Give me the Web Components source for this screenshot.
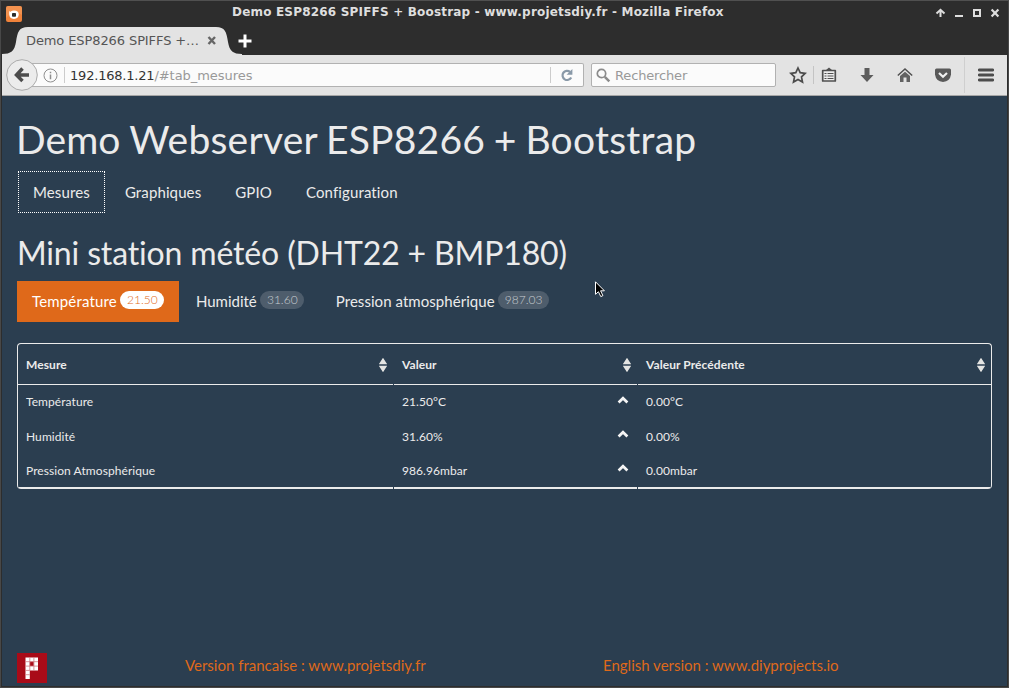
<!DOCTYPE html>
<html lang="fr">
<head>
<meta charset="utf-8">
<title>Demo ESP8266 SPIFFS + Boostrap</title>
<style>
  html, body { margin: 0; height: 100%; overflow: hidden; }
  body { font-family: "DejaVu Sans", sans-serif; }
</style>
</head>
<body>
<browser-window>
  <title-bar slot="chrome">Demo ESP8266 SPIFFS + Boostrap - www.projetsdiy.fr - Mozilla Firefox</title-bar>
  <tab-strip slot="chrome">Demo ESP8266 SPIFFS +…</tab-strip>
  <nav-toolbar slot="chrome"><span slot="host">192.168.1.21</span><span slot="path">/#tab_mesures</span><span slot="search">Rechercher</span></nav-toolbar>
  <station-page></station-page>
</browser-window>

<script>
const define = (name, html) => customElements.define(name, class extends HTMLElement {
  constructor() {
    super();
    const t = document.createElement('template');
    t.innerHTML = html;
    this.attachShadow({ mode: 'open' }).append(t.content.cloneNode(true));
  }
});

define('browser-window', `
<style>
  :host { display: flex; flex-direction: column; box-sizing: border-box; width: 100%; height: 100vh;
    background: #2d2d2d; border: 1px solid #484848; border-top-color: #505050; padding: 0 1px 1px; position: relative; }
  ::slotted(station-page) { flex: 1; }
  svg { position: absolute; left: 593px; top: 279px; }
</style>
<slot name="chrome"></slot><slot></slot>
<svg width="14" height="20" viewBox="0 0 14 20"><path d="M1.5 1.8V14.3L4.4 11.7L6.8 16.6L8.9 15.6L6.6 10.8H10.4Z" fill="#000" stroke="#fff" stroke-width="1"/></svg>
`);

define('title-bar', `
<style>
  :host { display: grid; grid-template-columns: 30px 1fr 74px; align-items: center; height: 24px; flex: none;
    color: #dedede; font: bold 12px/16px "DejaVu Sans", sans-serif; }
  .t { margin-left: 200px; white-space: nowrap; letter-spacing: .19px; position: relative; top: -1px; }
  svg { display: block; }
  .logo { margin: 1px 0 0 4px; }
</style>
<svg class="logo" width="16" height="16" viewBox="0 0 16 16"><rect width="16" height="16" rx="2" fill="#f0823a"/><path d="M0 12V2Q0 0 2 0H14Q16 0 16 2V9Q8 3 0 12Z" fill="#f6a164" opacity=".5"/><path d="M3.2 4.8Q4.2 6.600 5.2 5.3Q6 4.400 8 4.400Q12.6 4.4 12.8 8.3Q12.5 12.8 8 13Q3.4 12.8 3.2 8.300Z" fill="#fff"/><rect x="6" y="7" width="4" height="3.800" rx=".8" fill="#2d2d2d"/></svg>
<span class="t"><slot></slot></span>
<svg width="74" height="24" viewBox="0 0 74 24" fill="none" stroke="#dedede" stroke-width="2"><path d="M7.500 16V9M3.500 12.500L7.500 8.800L11.500 12.500"/><path d="M22 15H30"/><rect x="41" y="9" width="6" height="6"/><path d="M58.600 8.500L65.400 15.500M65.400 8.500L58.600 15.500" stroke-width="2.200"/></svg>
`);

define('tab-strip', `
<style>
  :host { display: flex; height: 29px; flex: none; margin-top: 1px; border-bottom: 1px solid #f0f0f0; margin-bottom: -1px;
    font: 13px/16px "DejaVu Sans", sans-serif; color: #555; letter-spacing: -.1px; }
  .tab { position: relative; box-sizing: border-box; display: flex; width: 232px; height: 29px; padding: 7px 0 0 24px; white-space: nowrap; }
  .bg { position: absolute; left: 0; top: 0; }
  .label { position: relative; width: 181px; flex: none; }
  .x { position: relative; margin-top: 3px; }
  .plus { margin: 8px 0 0 4px; }
</style>
<div class="tab">
  <svg class="bg" width="240" height="30" viewBox="0 0 240 30"><path d="M0 28C9 28 12.500 25 14 16C15.500 6 17 1 26 1H214C223 1 224.500 6 226 16C227.500 25 231 28 240 28V30H0Z" fill="#e3e3e3"/></svg>
  <span class="label"><slot></slot></span>
  <svg class="x" width="10" height="9" viewBox="0 0 10 9"><path d="M1.500 1L8 8M8 1L1.500 8" stroke="#666" stroke-width="2.400"/></svg>
</div>
<svg class="plus" width="14" height="14" viewBox="0 0 14 14"><path d="M7 .5V13.500M.5 7H13.500" stroke="#fff" stroke-width="3"/></svg>
`);

define('tool-icon', `
<style>
  :host { display: flex; justify-content: center; align-items: center; width: 38px; height: 40px; flex: none; }
  ::slotted(svg) { display: block; }
</style><slot></slot>
`);

define('nav-toolbar', `
<style>
  :host { display: flex; align-items: center; box-sizing: border-box; height: 41px; flex: none; background: #e3e3e3;
    border-bottom: 1px solid #a6a6a6; padding-left: 4px; font: 13px/16px "DejaVu Sans", sans-serif; color: #999; z-index: 1; }
  .back { position: relative; flex: none; width: 32px; height: 32px; z-index: 1; }
  .field { box-sizing: border-box; height: 24px; background: #fbfbfb; border: 1px solid #b1b1b1; border-radius: 2px; display: flex; align-items: center; white-space: nowrap; }
  .url { width: 556px; margin-left: -10px; padding-left: 15px; flex: none; border-left: 0; }
  .sep { width: 1px; height: 16px; background: #ccc; margin: 0 5px 0 6px; }
  .host { color: #333; letter-spacing: -.2px; }
  .host, .path, .q { padding-top: 1px; }
  .path { letter-spacing: -.05px; }
  .q { letter-spacing: -.15px; }
  .reload { margin-left: auto; display: flex; align-items: center; }
  .search { width: 185px; margin-left: 7px; padding-left: 4px; flex: none; }
  .search svg { margin-right: 4px; }
  .tall { width: 1px; height: 36px; background: #cfcfcf; flex: none; }
  svg { display: block; }
  .star { width: 36px; margin-left: 4px; }
  .short { width: 1px; height: 18px; background: #c4c4c4; margin-left: -3px; margin-right: -4px; flex: none; }
  .menu { width: 42px; }
</style>
<svg class="back" viewBox="0 0 32 32"><circle cx="16" cy="16" r="15.300" fill="#ececec" stroke="#ababab"/><path d="M10.500 16H23M16.500 9.500L10.500 16L16.500 22" fill="none" stroke="#4c4c4c" stroke-width="3.500"/></svg>
<div class="field url">
  <svg width="15" height="15" viewBox="0 0 15 15"><circle cx="7.500" cy="7.500" r="6.500" fill="none" stroke="#8f8f8f"/><path d="M7.500 6.500V11.200M7.500 3.700V5.300" stroke="#8f8f8f" stroke-width="1.500"/></svg>
  <span class="sep"></span><span class="host"><slot name="host"></slot></span><span class="path"><slot name="path"></slot></span>
  <span class="reload"><span class="sep" style="margin:0 9px 0 0"></span><svg style="margin-right:9px" width="14" height="14" viewBox="0 0 14 14"><path d="M10 3.800A4.600 4.600 0 1 0 11.200 9.500" fill="none" stroke="#8999a8" stroke-width="2.200"/><path d="M12.400 1V6.800H6.600Z" fill="#8999a8"/></svg></span>
</div>
<div class="field search"><svg width="15" height="15" viewBox="0 0 15 15"><circle cx="5.500" cy="5.500" r="4.200" fill="none" stroke="#8b8b8b" stroke-width="1.700"/><path d="M8.800 8.800L13.300 13.300" stroke="#8b8b8b" stroke-width="2.500"/></svg><span class="q"><slot name="search"></slot></span></div>
<tool-icon class="star"><svg width="18" height="18" viewBox="0 0 18 18"><path d="M9 2L11.200 6.700L16.200 7.300L12.500 10.800L13.500 16L9 13.400L4.500 16L5.500 10.800L1.800 7.300L6.800 6.700Z" fill="none" stroke="#4c4c4c" stroke-width="1.700"/></svg></tool-icon>
<span class="short"></span>
<tool-icon><svg width="16" height="16" viewBox="0 0 16 16"><path d="M1.700 3.500H14.300V14H1.700Z" fill="#eee" stroke="#505050" stroke-width="1.700" stroke-linejoin="round"/><path d="M4.500 3.500L8 .4L11.500 3.500Z" fill="#505050"/><path d="M3.500 6.500H5.500M3.500 9H5.500M3.500 11.500H5.500M6.500 6.500H12.500M6.500 9H12.500M6.500 11.500H12.500" stroke="#505050" stroke-width="1.100"/></svg></tool-icon>
<tool-icon><svg width="16" height="16" viewBox="0 0 16 16"><path d="M5.500 1H10.500V8H14.500L8 15L1.500 8H5.500Z" fill="#5c5c5c"/></svg></tool-icon>
<tool-icon><svg width="16" height="16" viewBox="0 0 16 16"><path d="M.8 8.500L8 2L15.200 8.500" fill="none" stroke="#505050" stroke-width="1.500"/><path d="M3 9L8 4.700L13 9V15H9.500V10.500H6.500V15H3Z" fill="#626262"/></svg></tool-icon>
<tool-icon><svg width="18" height="16" viewBox="0 0 18 16"><path d="M1 3Q1 1.500 2.500 1.500H15.500Q17 1.500 17 3V7.500Q16 14.500 9 15Q2 14.500 1 7.500Z" fill="#595959"/><path d="M5 6L9 9.800L13 6" fill="none" stroke="#f0f0f0" stroke-width="2.200"/></svg></tool-icon>
<span style="width:2px;flex:none"></span><span class="tall"></span>
<tool-icon class="menu"><svg width="16" height="14" viewBox="0 0 16 14"><path d="M1.200 2H14.800M1.200 7H14.800M1.200 12H14.800" stroke="#4c4c4c" stroke-width="2.800" stroke-linecap="round"/></svg></tool-icon>
`);

define('nav-pill', `
<style>
  :host { display: flex; box-sizing: border-box; height: 41px; padding: 10px 15px; line-height: 21px; white-space: nowrap; color: #ebebeb; }
  :host([focused]) { outline: 1px dotted #fff; height: 40px; padding: 10px 14.500px 10px 14px; margin: 0 1.500px 0 1px; }
  :host([active]) { background: #df691a; color: #fff; --badge-bg: #fff; --badge-fg: #df691a; }
</style><slot></slot>
`);

define('value-badge', `
<style>
  :host { display: block; box-sizing: border-box; height: 18px; width: 44px; padding: 3px 0 0 1px; margin-left: 3px;
    border-radius: 9px; background: var(--badge-bg, #4e5d6c); color: var(--badge-fg, #c8cdd2);
    font: 300 12px/12px Lato, sans-serif; text-align: center; letter-spacing: 0; }
  :host([wide]) { width: 51px; }
</style><slot></slot>
`);

define('sort-icon', `
<style>:host { display: block; } svg { display: block; }</style>
<svg width="10" height="16" viewBox="0 0 10 16"><path d="M5 .8L9.200 7.200H.8ZM.8 8.800H9.200L5 15.200Z" fill="#e4e4e2"/></svg>
`);

define('up-icon', `
<style>:host { display: block; } svg { display: block; }</style>
<svg width="12" height="8" viewBox="0 0 12 8"><path d="M1.600 6.500L6 2.200L10.400 6.500" fill="none" stroke="#f4f4f4" stroke-width="2.700"/></svg>
`);

define('measure-table', `
<style>
  :host { display: block; box-sizing: border-box; border: 1px solid #ebebeb; border-bottom: 0; border-radius: 4px; overflow: hidden;
    font: 12px/17px Lato, sans-serif; height: 146px; letter-spacing: .07px; }
  .g { display: grid; grid-template-columns: 376px 244px 1fr; grid-template-rows: 41px 34px 35px 35px; }
  .g > div { display: flex; align-items: center; justify-content: space-between; box-sizing: border-box; padding: 0 7px 0 8px; }
  .g > .r1 { padding-bottom: 2px; }
  .h { font-weight: bold; border-bottom: 1px solid #ebebeb; }
  .b { border-bottom: 2px solid #ebebeb; }
  .m { position: relative; }
  .m::after { content: ""; position: absolute; right: 0; bottom: -2px; width: 1px; height: 3px; background: #2b3e50; }
  .h sort-icon { margin: 1px -1px 0 0; }
  .h:nth-child(3) sort-icon { margin-right: -2px; }
  up-icon { margin: -5px 2.500px 0 0; }
  .r1 up-icon { margin-top: -3px; }
</style>
<div class="g">
  <div class="h m">Mesure<sort-icon></sort-icon></div><div class="h m">Valeur<sort-icon></sort-icon></div><div class="h">Valeur Précédente<sort-icon></sort-icon></div>
  <div class="r1">Température</div><div class="r1">21.50°C<up-icon></up-icon></div><div class="r1">0.00°C</div>
  <div>Humidité</div><div>31.60%<up-icon></up-icon></div><div>0.00%</div>
  <div class="b m">Pression Atmosphérique</div><div class="b m">986.96mbar<up-icon></up-icon></div><div class="b">0.00mbar</div>
</div>
`);

define('page-footer', `
<style>
  :host { display: flex; align-items: flex-start; height: 33px; color: #df691a; white-space: nowrap; line-height: 21px; }
  svg { display: block; flex: none; margin-right: 138px; }
  .fr { width: 418px; margin-top: 2px; flex: none; } .en { margin-top: 2px; }
</style>
<svg width="30" height="30" viewBox="0 0 30 30"><rect width="30" height="30" fill="#a90b18"/><path d="M8.500 4.500H21V17.500H12.800V26H8.500Z" fill="#fff"/><rect x="12.800" y="8.600" width="4" height="4.400" fill="#a90b18"/><path d="M12.800 4.500V17.500M16.900 4.500V17.500M8.500 8.700H21M8.500 13.100H21M8.500 17.400H12.800M8.500 21.700H12.800" stroke="#cf7a82" stroke-width=".8"/></svg>
<span class="fr">Version francaise : www.projetsdiy.fr</span><span class="en">English version : www.diyprojects.io</span>
`);

define('station-page', `
<style>
  :host { display: flex; flex-direction: column; box-sizing: border-box; background: #2b3e50; color: #ebebeb; padding: 0 15px;
    font: 15px/21px Lato, sans-serif; font-variant-ligatures: none; min-height: 0; overflow: hidden; }
  h1, h2 { margin: 0; font-weight: 400; white-space: nowrap; }
  h1 { font-size: 39px; line-height: 43px; margin: 22px 0 0 -1px; letter-spacing: .24px; word-spacing: -1.500px; }
  h1 span { letter-spacing: .1px; }
  h2 { font-size: 32px; line-height: 35px; margin-top: 22px; letter-spacing: -.15px; }
  nav { display: flex; gap: 2px; }
  .main { margin: 11px 0 0 1px; gap: 4px; letter-spacing: .12px; }
  .sub { margin-top: 11px; }
  measure-table { margin-top: 21px; flex: none; }
  page-footer { margin-top: auto; }
</style>
<h1><span>Demo </span>Webserver ESP8266 + Bootstrap</h1>
<nav class="main"><nav-pill focused>Mesures</nav-pill><nav-pill>Graphiques</nav-pill><nav-pill>GPIO</nav-pill><nav-pill>Configuration</nav-pill></nav>
<h2>Mini station météo (DHT22 + BMP180)</h2>
<nav class="sub"><nav-pill active style="letter-spacing:.16px">Température<value-badge>21.50</value-badge></nav-pill><nav-pill>Humidité<value-badge>31.60</value-badge></nav-pill><nav-pill style="letter-spacing:.05px">Pression atmosphérique<value-badge wide>987.03</value-badge></nav-pill></nav>
<measure-table></measure-table>
<page-footer></page-footer>
`);
</script>
</body>
</html>
